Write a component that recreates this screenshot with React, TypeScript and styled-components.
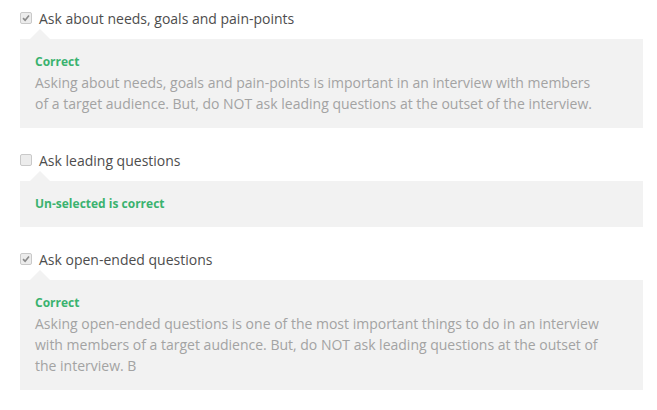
import React from 'react';
import styled, { createGlobalStyle } from 'styled-components';

const GlobalStyle = createGlobalStyle`
  body {
    margin: 0;
    background: #ffffff;
    font-family: 'Open Sans', 'Noto Sans', Arial, sans-serif;
  }
`;

const List = styled.div`
  padding: 7px 14px 0 20px;
  display: flex;
  flex-direction: column;
`;

const Option = styled.div`
  display: flex;
  flex-direction: column;
  margin-bottom: 21px;
`;

const Label = styled.label`
  display: flex;
  align-items: center;
  height: 22px;
  font-size: 14px;
  color: #4d4d4d;
  gap: 7px;
`;

const Box = styled.span<{ checked?: boolean }>`
  width: 12px;
  height: 12px;
  box-sizing: border-box;
  border: 1px solid #c9c9c9;
  border-radius: 2px;
  background: #ececec;
  display: flex;
  align-items: center;
  justify-content: center;
  margin-top: -1px;
  svg {
    display: ${({ checked }) => (checked ? 'block' : 'none')};
  }
`;

const Feedback = styled.div<{ compact?: boolean }>`
  position: relative;
  margin-top: 10px;
  background: #f2f2f2;
  padding: ${({ compact }) => (compact ? '15px 38px 15px 15px' : '15px 38px 14px 15px')};

  &::before {
    content: '';
    position: absolute;
    top: -10px;
    left: 10px;
    border-left: 10px solid transparent;
    border-right: 10px solid transparent;
    border-bottom: 10px solid #f2f2f2;
  }
`;

const Verdict = styled.div`
  font-size: 12px;
  line-height: 16px;
  font-weight: 700;
  color: #3ab26f;
`;

const Explain = styled.p`
  margin: 2px 0 0;
  font-size: 14px;
  line-height: 21px;
  color: #a3a3a3;
`;

const Check = () => (
  <svg width="8" height="8" viewBox="0 0 8 8">
    <path d="M1 4.2 L3.1 6.2 L7 1.4" fill="none" stroke="#8a8a8a" strokeWidth="1.6" />
  </svg>
);

type Item = { label: string; checked: boolean; verdict: string; text?: string };

const items: Item[] = [
  {
    label: 'Ask about needs, goals and pain-points',
    checked: true,
    verdict: 'Correct',
    text:
      'Asking about needs, goals and pain-points is important in an interview with members of a target audience. But, do NOT ask leading questions at the outset of the interview.',
  },
  {
    label: 'Ask leading questions',
    checked: false,
    verdict: 'Un-selected is correct',
  },
  {
    label: 'Ask open-ended questions',
    checked: true,
    verdict: 'Correct',
    text:
      'Asking open-ended questions is one of the most important things to do in an interview with members of a target audience. But, do NOT ask leading questions at the outset of the interview. B',
  },
];

export default function App() {
  return (
    <>
      <GlobalStyle />
      <List>
        {items.map((it) => (
          <Option key={it.label}>
            <Label>
              <Box checked={it.checked}>
                <Check />
              </Box>
              {it.label}
            </Label>
            <Feedback compact={!it.text}>
              <Verdict>{it.verdict}</Verdict>
              {it.text && <Explain>{it.text}</Explain>}
            </Feedback>
          </Option>
        ))}
      </List>
    </>
  );
}
